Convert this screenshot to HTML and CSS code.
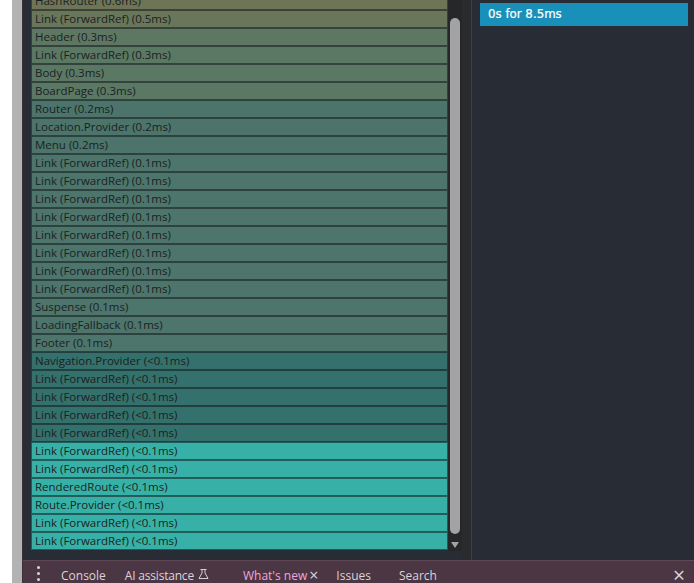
FILE: index.html
```html
<!DOCTYPE html>
<html>
<head>
<meta charset="utf-8">
<link rel="stylesheet" href="styles.css">
</head>
<body>
<div class="page">
  <div class="strip-white"></div>
  <div class="strip-gray"></div>
  <div class="devtools">
    <div class="main">
      <div class="chart">
        <div class="bars">
          <div class="bar c0">HashRouter (0.6ms)</div>
          <div class="bar c1">Link (ForwardRef) (0.5ms)</div>
          <div class="bar c2">Header (0.3ms)</div>
          <div class="bar c3">Link (ForwardRef) (0.3ms)</div>
          <div class="bar c3">Body (0.3ms)</div>
          <div class="bar c3">BoardPage (0.3ms)</div>
          <div class="bar c4">Router (0.2ms)</div>
          <div class="bar c4">Location.Provider (0.2ms)</div>
          <div class="bar c4">Menu (0.2ms)</div>
          <div class="bar c5">Link (ForwardRef) (0.1ms)</div>
          <div class="bar c5">Link (ForwardRef) (0.1ms)</div>
          <div class="bar c5">Link (ForwardRef) (0.1ms)</div>
          <div class="bar c5">Link (ForwardRef) (0.1ms)</div>
          <div class="bar c5">Link (ForwardRef) (0.1ms)</div>
          <div class="bar c5">Link (ForwardRef) (0.1ms)</div>
          <div class="bar c5">Link (ForwardRef) (0.1ms)</div>
          <div class="bar c5">Link (ForwardRef) (0.1ms)</div>
          <div class="bar c5">Suspense (0.1ms)</div>
          <div class="bar c5">LoadingFallback (0.1ms)</div>
          <div class="bar c5">Footer (0.1ms)</div>
          <div class="bar c6">Navigation.Provider (&lt;0.1ms)</div>
          <div class="bar c6">Link (ForwardRef) (&lt;0.1ms)</div>
          <div class="bar c6">Link (ForwardRef) (&lt;0.1ms)</div>
          <div class="bar c6">Link (ForwardRef) (&lt;0.1ms)</div>
          <div class="bar c6">Link (ForwardRef) (&lt;0.1ms)</div>
          <div class="bar c7">Link (ForwardRef) (&lt;0.1ms)</div>
          <div class="bar c7">Link (ForwardRef) (&lt;0.1ms)</div>
          <div class="bar c7">RenderedRoute (&lt;0.1ms)</div>
          <div class="bar c7">Route.Provider (&lt;0.1ms)</div>
          <div class="bar c7">Link (ForwardRef) (&lt;0.1ms)</div>
          <div class="bar c7">Link (ForwardRef) (&lt;0.1ms)</div>
        </div>
        <div class="scrollbar">
          <div class="thumb"></div>
          <div class="arrow"></div>
        </div>
        <div class="gutter"></div>
      </div>
      <div class="side">
        <div class="commit">0s for 8.5ms</div>
      </div>
    </div>
    <div class="drawer">
      <span class="kebab"><i></i><i></i><i></i></span>
      <span class="tab t-console">Console</span>
      <span class="tab t-ai">AI assistance
        <svg class="flask" width="11" height="12" viewBox="0 0 11 12"><path d="M2.5 1.5h6M4 1.5v3.5L1 10.5h9L7 5V1.5" fill="none" stroke="#d8cfd4" stroke-width="1"/></svg>
      </span>
      <span class="tab t-new">What's new<span class="x">×</span></span>
      <span class="tab t-issues">Issues</span>
      <span class="tab t-search">Search</span>
      <span class="close">×</span>
    </div>
  </div>
</div>
</body>
</html>
```
FILE: styles.css
```css
html, body {
  margin: 0;
  padding: 0;
  background: #ffffff;
  overflow: hidden;
}
.page {
  display: flex;
  width: 694px;
  height: 583px;
  overflow: hidden;
}
.strip-white {
  width: 12px;
  background: #ffffff;
}
.strip-gray {
  width: 10px;
  background: #b3b3b3;
}
.devtools {
  flex: 1;
  display: flex;
  flex-direction: column;
  border-left: 1px solid #3d2e38;
  background: #282c34;
  min-width: 0;
}
.main {
  height: 560px;
  display: flex;
  overflow: hidden;
}
.chart {
  display: flex;
  width: 449px;
  flex: none;
  border-right: 1px solid #3b404b;
  padding-left: 8px;
  box-sizing: border-box;
  overflow: hidden;
}
.bars {
  width: 417px;
  margin-top: -8px;
  display: flex;
  flex-direction: column;
}
.bar {
  height: 18px;
  box-sizing: border-box;
  border: 1px solid rgba(20, 24, 28, 0.55);
  padding-left: 3px;
  font-family: "Open Sans", "Noto Sans", sans-serif;
  font-size: 11.5px;
  line-height: 16px;
  color: #1b1f22;
  white-space: nowrap;
  overflow: hidden;
  flex: none;
}
.c0 { background: #6e7556; }
.c1 { background: #69765a; }
.c2 { background: #5e7762; }
.c3 { background: #5a7864; }
.c4 { background: #4c746a; }
.c5 { background: #4d756c; }
.c6 { background: #34706c; }
.c7 { background: #37b1a7; }
.scrollbar {
  width: 14px;
  height: 551px;
  background: #262728;
  display: flex;
  flex-direction: column;
  align-items: center;
  padding-top: 18px;
  box-sizing: border-box;
  flex: none;
}
.thumb {
  width: 10px;
  height: 516px;
  background: #a3a3a3;
  border-radius: 5px;
}
.arrow {
  margin-top: 8px;
  width: 0;
  height: 0;
  border-left: 4px solid transparent;
  border-right: 4px solid transparent;
  border-top: 6px solid #a3a3a3;
}
.gutter {
  flex: 1;
  background: #2a2b2f;
}
.side {
  flex: 1;
  padding: 3px 6px 0 8px;
  background: #282c34;
}
.commit {
  height: 23px;
  background: #1990b9;
  color: #ffffff;
  font-family: "DejaVu Sans", sans-serif;
  font-size: 11.8px;
  line-height: 23px;
  padding-left: 8px;
  -webkit-text-stroke: 0.2px #ffffff;
}
.drawer {
  height: 23px;
  flex: none;
  background: #4b3643;
  border-top: 1px solid #5f4655;
  display: flex;
  align-items: center;
  font-family: "Open Sans", "Noto Sans", sans-serif;
  font-size: 12px;
  color: #dcd3d8;
  padding-top: 6px;
  box-sizing: border-box;
}
.kebab {
  display: flex;
  flex-direction: column;
  gap: 3px;
  margin-left: 14px;
  margin-top: -3px;
}
.kebab i {
  display: block;
  width: 3px;
  height: 3px;
  border-radius: 50%;
  background: #dcd3d8;
}
.tab {
  display: flex;
  align-items: center;
  white-space: nowrap;
}
.t-console { margin-left: 21px; }
.t-ai { margin-left: 19px; letter-spacing: -0.2px; }
.flask { margin-left: 4px; margin-top: -3px; }
.t-new { margin-left: 34px; color: #f0a5dd; }
.t-new .x { color: #dcd3d8; font-size: 16px; margin-left: 2px; line-height: 12px; }
.t-issues { margin-left: 18px; }
.t-search { margin-left: 28px; }
.close {
  margin-left: auto;
  margin-right: 9px;
  font-size: 21px;
  line-height: 12px;
  color: #dcd3d8;
}
```
